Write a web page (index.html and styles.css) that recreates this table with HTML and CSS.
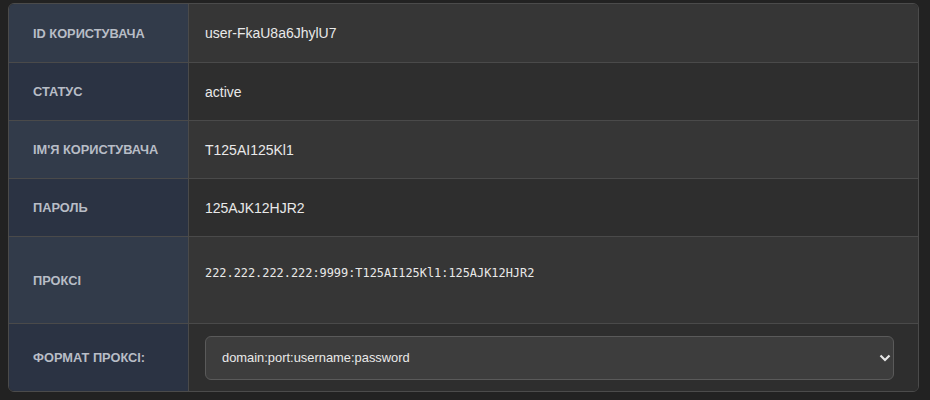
FILE: index.html
```html
<!DOCTYPE html>
<html lang="uk">
<head>
<meta charset="utf-8">
<link rel="stylesheet" href="styles.css">
</head>
<body>
<div class="card">
  <table class="info">
    <tr class="odd">
      <th>ID користувача</th>
      <td>user-FkaU8a6JhylU7</td>
    </tr>
    <tr class="even">
      <th>Статус</th>
      <td>active</td>
    </tr>
    <tr class="odd">
      <th>Ім'я користувача</th>
      <td>T125AI125Kl1</td>
    </tr>
    <tr class="even">
      <th>Пароль</th>
      <td>125AJK12HJR2</td>
    </tr>
    <tr class="odd proxy-row">
      <th>Проксі</th>
      <td><code class="proxy">222.222.222.222:9999:T125AI125Kl1:125AJK12HJR2</code></td>
    </tr>
    <tr class="even format-row">
      <th>Формат проксі:</th>
      <td>
        <div class="select-wrap">
          <select class="select">
            <option>domain:port:username:password</option>
          </select>
          <svg class="chevron" width="12" height="10" viewBox="0 0 12 10"><path d="M1.5 2.5 L6 7 L10.5 2.5" fill="none" stroke="#e6e6e6" stroke-width="2.2"/></svg>
        </div>
      </td>
    </tr>
  </table>
</div>
</body>
</html>
```

FILE: styles.css
```css
html, body {
  margin: 0;
  padding: 0;
  background: #222222;
}
body {
  padding: 3px 11px 8px 8px;
  font-family: "Liberation Sans", Arial, sans-serif;
}
.card {
  border: 1px solid #4b4b4b;
  border-radius: 6px;
  overflow: hidden;
  width: 909px;
}
.info {
  width: 100%;
  border-collapse: collapse;
}
.info th, .info td {
  border-top: 1px solid #4a4a4a;
  height: 57px;
  vertical-align: middle;
}
.info tr:first-child th, .info tr:first-child td {
  border-top: none;
  height: 58px;
}
.info th {
  width: 155px;
  padding: 0 0 0 24px;
  text-align: left;
  font-size: 12.8px;
  font-weight: bold;
  text-transform: uppercase;
  color: #b8bdc6;
  border-right: 1px solid #4a4a4a;
}
.info td {
  padding: 0 24px 0 16px;
  font-size: 14px;
  color: #e9e9e9;
}
.odd th { background: #323b4a; }
.even th { background: #2b3343; }
.odd td { background: #363636; }
.even td { background: #2e2e2e; }
.proxy-row th { height: 86px; }
.proxy-row td { height: 70px; padding-bottom: 16px; }
.proxy {
  font-family: "DejaVu Sans Mono", monospace;
  font-size: 11.9px;
  color: #e9e9e9;
}
.format-row th, .format-row td { height: 67px; }
.select-wrap {
  position: relative;
  width: 689px;
}
.select {
  appearance: none;
  -webkit-appearance: none;
  width: 100%;
  height: 44px;
  margin: 0;
  padding: 0 16px;
  background: #3d3d3d;
  border: 1px solid #5a5a5a;
  border-radius: 6px;
  color: #e9e9e9;
  font-family: "Liberation Sans", Arial, sans-serif;
  font-size: 12.9px;
  display: block;
}
.chevron {
  position: absolute;
  right: 3px;
  top: 17px;
}
```
